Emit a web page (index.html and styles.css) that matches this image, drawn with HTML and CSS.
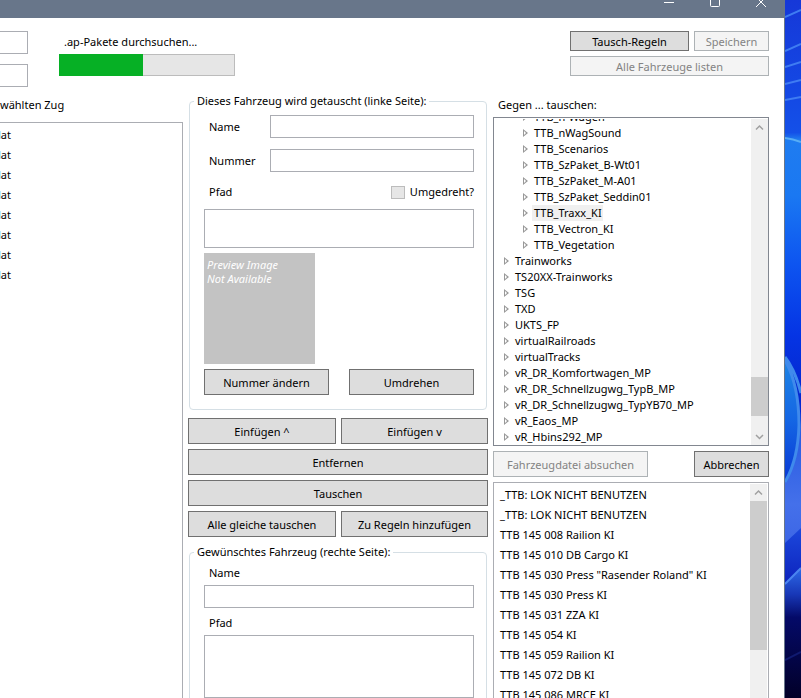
FILE: index.html
```html
<!DOCTYPE html>
<html lang="de">
<head>
<meta charset="utf-8">
<title>Fahrzeugtausch</title>
<link rel="stylesheet" href="styles.css">
</head>
<body>
<div class="window">
  <header class="titlebar">
    <button class="caption" aria-label="Minimieren"><svg width="12" height="12" viewBox="0 0 12 12"><path d="M1 5.500H11"/></svg></button>
    <button class="caption" aria-label="Maximieren"><svg width="12" height="12" viewBox="0 0 12 12"><rect x="1.500" y="0.500" width="9" height="9" rx="1"/></svg></button>
    <button class="caption" aria-label="Schließen"><svg width="12" height="12" viewBox="0 0 12 12"><path d="M1 0L11 10M11 0L1 10"/></svg></button>
  </header>
  <div class="toolbar">
    <div class="route">
      <input type="text" class="cut" aria-label="Strecke">
      <input type="text" class="cut" aria-label="Szenario">
    </div>
    <div class="status">
      <span class="status-text" id="scan">.ap-Pakete durchsuchen...</span>
      <div class="progress" role="progressbar" aria-labelledby="scan" aria-valuenow="48"><div class="bar" style="width:48%"></div></div>
    </div>
    <div class="actions">
      <button>Tausch-Regeln</button>
      <button disabled>Speichern</button>
      <button class="wide" disabled>Alle Fahrzeuge listen</button>
    </div>
  </div>
  <main class="columns">
    <section class="train">
      <h2 class="train-title">wählten Zug</h2>
      <ul class="list cut">
        <li>lat</li><li>lat</li><li>lat</li><li>lat</li><li>lat</li><li>lat</li><li>lat</li><li>lat</li>
      </ul>
    </section>
    <section class="swap">
      <fieldset class="source">
        <legend>Dieses Fahrzeug wird getauscht (linke Seite):</legend>
        <div class="field"><label for="name">Name</label><input type="text" id="name"></div>
        <div class="field"><label for="number">Nummer</label><input type="text" id="number"></div>
        <div class="path-row"><label for="path">Pfad</label><label class="check"><input type="checkbox" disabled>Umgedreht?</label></div>
        <textarea id="path" class="short"></textarea>
        <div class="preview">Preview Image<br>Not Available</div>
        <div class="pair"><button>Nummer ändern</button><button>Umdrehen</button></div>
      </fieldset>
      <div class="commands">
        <button>Einfügen ^</button>
        <button>Einfügen v</button>
        <button class="wide">Entfernen</button>
        <button class="wide">Tauschen</button>
        <button>Alle gleiche tauschen</button>
        <button>Zu Regeln hinzufügen</button>
      </div>
      <fieldset class="target">
        <legend>Gewünschtes Fahrzeug (rechte Seite):</legend>
        <label for="tname">Name</label>
        <input type="text" id="tname">
        <label for="tpath">Pfad</label>
        <textarea id="tpath" class="tall"></textarea>
      </fieldset>
    </section>
    <section class="pool">
      <h2 class="pool-title">Gegen ... tauschen:</h2>
      <div class="tree">
        <ul class="nodes">
          <li class="sub"><span>TTB_n-Wagen</span></li>
          <li class="sub"><span>TTB_nWagSound</span></li>
          <li class="sub"><span>TTB_Scenarios</span></li>
          <li class="sub"><span>TTB_SzPaket_B-Wt01</span></li>
          <li class="sub"><span>TTB_SzPaket_M-A01</span></li>
          <li class="sub"><span>TTB_SzPaket_Seddin01</span></li>
          <li class="sub"><span class="selected">TTB_Traxx_KI</span></li>
          <li class="sub"><span>TTB_Vectron_KI</span></li>
          <li class="sub"><span>TTB_Vegetation</span></li>
          <li><span>Trainworks</span></li>
          <li><span>TS20XX-Trainworks</span></li>
          <li><span>TSG</span></li>
          <li><span>TXD</span></li>
          <li><span>UKTS_FP</span></li>
          <li><span>virtualRailroads</span></li>
          <li><span>virtualTracks</span></li>
          <li><span>vR_DR_Komfortwagen_MP</span></li>
          <li><span>vR_DR_Schnellzugwg_TypB_MP</span></li>
          <li><span>vR_DR_Schnellzugwg_TypYB70_MP</span></li>
          <li><span>vR_Eaos_MP</span></li>
          <li><span>vR_Hbins292_MP</span></li>
        </ul>
        <div class="scrollbar">
          <svg class="arrow" width="17" height="17" viewBox="0 0 17 17"><path d="M5 10.500L8.500 7L12 10.500"/></svg>
          <div class="track"><div class="thumb low"></div></div>
          <svg class="arrow" width="17" height="17" viewBox="0 0 17 17"><path d="M5 7L8.500 10.500L12 7"/></svg>
        </div>
      </div>
      <div class="scan-row"><button class="scan" disabled>Fahrzeugdatei absuchen</button><button class="cancel">Abbrechen</button></div>
      <div class="list vehicles">
        <ul>
          <li>_TTB: LOK NICHT BENUTZEN</li>
          <li>_TTB: LOK NICHT BENUTZEN</li>
          <li>TTB 145 008 Railion KI</li>
          <li>TTB 145 010 DB Cargo KI</li>
          <li>TTB 145 030 Press "Rasender Roland" KI</li>
          <li>TTB 145 030 Press KI</li>
          <li>TTB 145 031 ZZA KI</li>
          <li>TTB 145 054 KI</li>
          <li>TTB 145 059 Railion KI</li>
          <li>TTB 145 072 DB KI</li>
          <li>TTB 145 086 MRCE KI</li>
        </ul>
        <div class="scrollbar">
          <svg class="arrow" width="17" height="17" viewBox="0 0 17 17"><path d="M5 10.500L8.500 7L12 10.500"/></svg>
          <div class="track"><div class="thumb high"></div></div>
        </div>
      </div>
    </section>
  </main>
</div>
<div class="desktop">
  <svg viewBox="0 0 16 698" width="16" height="698" aria-hidden="true">
    <defs>
      <linearGradient id="base" x1="0" y1="0" x2="0" y2="1">
        <stop offset="0" stop-color="#1638d8"/><stop offset=".13" stop-color="#1448e4"/><stop offset=".19" stop-color="#1450e8"/>
        <stop offset=".2" stop-color="#1f7cf0"/><stop offset=".28" stop-color="#1a78f2"/><stop offset=".38" stop-color="#0d54f0"/>
        <stop offset=".48" stop-color="#0534e4"/><stop offset=".56" stop-color="#0428d0"/><stop offset="1" stop-color="#0428d0"/>
      </linearGradient>
      <linearGradient id="petal" x1="0" y1="0" x2="0" y2="1">
        <stop offset="0" stop-color="#1f86e4"/><stop offset=".5" stop-color="#1466e4"/><stop offset="1" stop-color="#0838d4"/>
      </linearGradient>
      <linearGradient id="glow" x1="0" y1="0" x2="0" y2="1">
        <stop offset="0" stop-color="#2458e0"/><stop offset=".6" stop-color="#4470ea"/><stop offset="1" stop-color="#3a62e4"/>
      </linearGradient>
      <linearGradient id="fold" x1="0" y1="0" x2="0" y2="1">
        <stop offset="0" stop-color="#1c48dc"/><stop offset="1" stop-color="#0818b4"/>
      </linearGradient>
      <linearGradient id="dusk" x1="0" y1="0" x2="0" y2="1">
        <stop offset="0" stop-color="#2e6ae8"/><stop offset=".2" stop-color="#1838b8"/><stop offset=".38" stop-color="#040a68"/><stop offset="1" stop-color="#020028"/>
      </linearGradient>
    </defs>
    <rect width="16" height="698" fill="url(#base)"/>
    <g fill="none" stroke="#3f7cf2" stroke-width="2">
      <path d="M0 17L16 10M0 51L16 44M0 67L16 62M0 84L16 80M0 100L16 97"/>
      <path d="M0 138Q8 139 16 142" stroke="#58aef5"/>
    </g>
    <path d="M0 470Q12 455 16 420V540L0 560Z" fill="url(#glow)"/>
    <path d="M0 357Q14 380 14 425Q13 460 0 482Z" fill="url(#petal)"/>
    <path d="M0 357Q10 370 16 393M0 360Q14 385 14 425Q13 460 0 482" fill="none" stroke="#3f8aec" stroke-width="3"/>
    <path d="M0 543L16 528V600H0Z" fill="url(#fold)"/>
    <path d="M0 584L16 568V698H0Z" fill="url(#dusk)"/>
    <path d="M0 584L16 568" stroke="#4a84f0" stroke-width="2"/>
    <path d="M0 660L16 652" stroke="#101a70" stroke-width="2"/>
  </svg>
</div>
</body>
</html>
```
FILE: styles.css
```css
* { box-sizing: border-box; }
body {
  margin: 0;
  height: 100vh;
  overflow: hidden;
  display: flex;
  font: 11px/16px "Noto Sans", "Open Sans", sans-serif;
  color: #000;
  background: #0a45ee;
}
ul { list-style: none; margin: 0; padding: 0; }
h2 { margin: 0; font-size: 11px; font-weight: 400; }
button, input, textarea { font: inherit; color: inherit; margin: 0; border-radius: 0; }
button { background: #ddd; border: 1px solid #707070; padding: 1px 0 0; height: 26px; white-space: nowrap; }
button:disabled { background: #f4f4f4; border-color: #adb2b5; color: #838383; }
input[type="text"], textarea { display: block; width: 100%; height: 23px; border: 1px solid #abadb3; background: #fff; padding: 2px; resize: none; }

.window { flex: 1; min-width: 0; display: flex; flex-direction: column; background: #fff; border-right: 1px solid #68768a; }
.titlebar { display: flex; justify-content: flex-end; flex: none; height: 18px; background: #68768a; overflow: hidden; }
.titlebar .caption { width: 46px; height: 18px; padding: 0; border: 0; background: none; display: flex; justify-content: center; align-items: flex-start; }
.caption svg { margin-top: -3px; fill: none; stroke: #fff; }

.toolbar { display: flex; flex: none; padding: 13px 15px 0 0; height: 77px; }
.route { width: 28px; display: grid; gap: 10px; align-content: start; }
input.cut, .list.cut { border-left: 0; }
.status { width: 176px; margin-left: 31px; }
.status-text { display: block; height: 23px; padding: 3px 5px; }
.progress { height: 22px; border: 1px solid #bcbcbc; background: #e6e6e6; }
.bar { height: 22px; margin: -1px; background: #06b025; }
.actions { margin-left: auto; width: 199px; display: grid; grid-template-columns: 119px 1fr; gap: 5px; align-content: start; }
.actions button { height: 20px; }
.wide { grid-column: 1 / -1; }

.columns { flex: 1; min-height: 0; display: grid; grid-template-columns: 183fr 300fr 276fr; gap: 5px; padding-right: 15px; }
.columns > section { min-width: 0; min-height: 0; display: flex; flex-direction: column; }
.train-title { padding: 2px 0 9px; }
.list { border: 1px solid #abadb3; padding: 2px; line-height: 20px; overflow: hidden; white-space: nowrap; }
.train .list { flex: 1; border-bottom: 0; padding-left: 0; }
.train li { margin-left: -2px; }

fieldset { margin: 0 1px; padding: 0 12px 14px 14px; border: 1px solid #d5dfe5; border-radius: 4px; min-width: 0; }
legend { margin-left: -10px; padding: 0 3px; line-height: 12px; height: 12px; }
.field { display: grid; grid-template-columns: 66px 1fr; align-items: center; margin-bottom: 11px; }
.field label, .path-row > label:first-child, .target label { padding-left: 5px; }
.source .field:first-of-type { margin-top: 8px; }
.path-row { display: flex; justify-content: space-between; align-items: center; height: 16px; margin: 12px 0 9px; }
.check { display: flex; align-items: center; gap: 5px; }
.check input { appearance: none; width: 14px; height: 13px; border: 1px solid #bcbcbc; background: #e6e6e6; }
textarea.short { height: 39px; }
.preview { width: 111px; height: 111px; margin: 5px 0; padding: 5px 3px; background: #c3c3c3; color: #fff; line-height: 14px; font-style: italic; }
.pair { display: grid; grid-template-columns: 1fr 1fr; gap: 20px; }
.commands { display: grid; grid-template-columns: 148fr 147fr; gap: 5px; margin: 8px 0 9px; }
.target { flex: 1; }
.target label { display: block; padding-top: 7px; padding-bottom: 4px; }
textarea.tall { height: 63px; }

.pool-title { padding: 2px 5px 4px; }
.tree { height: 329px; flex: none; display: flex; border: 1px solid #828790; padding-top: 1px; }
.nodes { flex: 1; min-width: 0; overflow: hidden; display: flex; flex-direction: column; justify-content: flex-end; }
.nodes li { flex: none; display: flex; align-items: center; height: 16px; padding-left: 10px; white-space: nowrap; }
.nodes li.sub { padding-left: 29px; }
.nodes li::before { content: ""; width: 5px; height: 8px; margin-right: 4px; background: #999; clip-path: polygon(0 0, 100% 50%, 0 100%, 0 0, 1px 2px, 1px 6px, 3px 50%, 1px 2px); }
.nodes span { padding: 0 1px 0 2px; }
.selected { background: #f0f0f0; }
.scrollbar { flex: none; width: 17px; display: flex; flex-direction: column; background: #f0f0f0; }
.arrow { flex: none; fill: none; stroke: #a0a0a0; stroke-width: 1.500; }
.track { flex: 1; display: flex; flex-direction: column; }
.thumb { background: #cdcdcd; }
.low { height: 39px; margin-top: auto; margin-bottom: 12px; }
.high { height: 149px; }
.scan-row { display: flex; justify-content: space-between; flex: none; margin: 5px 0; }
.scan { width: 155px; }
.cancel { width: 75px; }
.vehicles { flex: 1; min-height: 0; display: flex; justify-content: space-between; padding: 1px 1px 0 6px; border-bottom: 0; }
.vehicles ul { padding-top: 1px; }
.desktop { flex: none; width: 16px; overflow: hidden; }
.desktop svg { display: block; }
```
